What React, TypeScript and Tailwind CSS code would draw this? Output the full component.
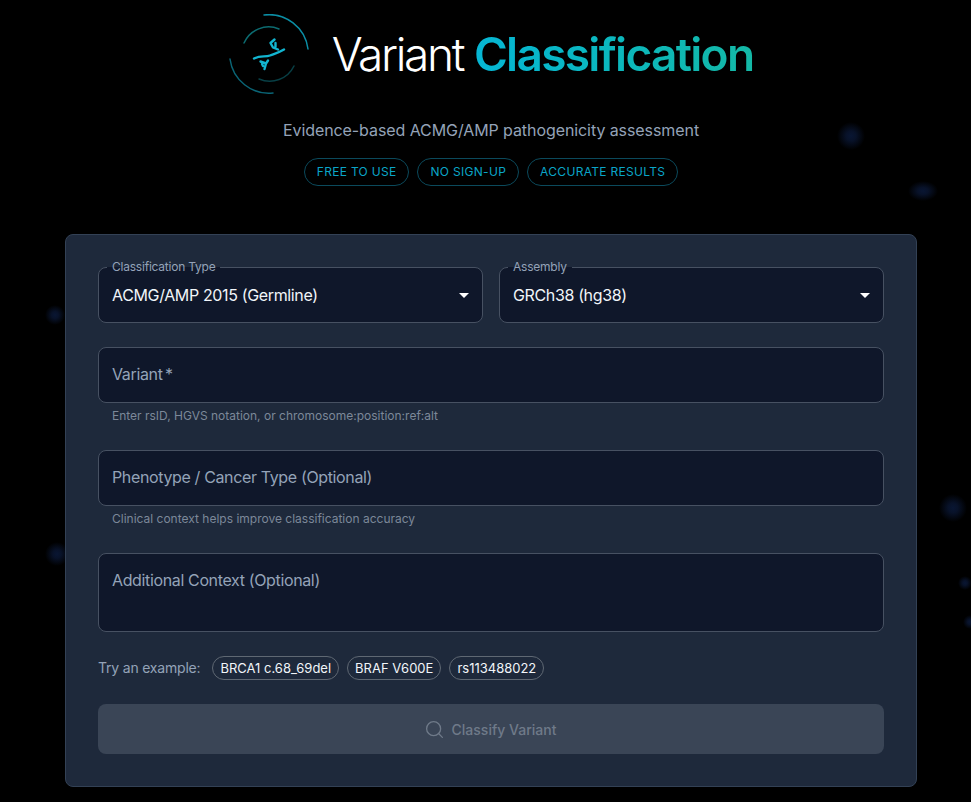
import { Search } from 'lucide-react'

const DOTS = [
  { x: 851, y: 136, w: 28, h: 28 },
  { x: 923, y: 191, w: 30, h: 20 },
  { x: 55, y: 315, w: 20, h: 20 },
  { x: 57, y: 554, w: 24, h: 24 },
  { x: 953, y: 508, w: 28, h: 28 },
  { x: 965, y: 583, w: 14, h: 14 },
  { x: 970, y: 622, w: 14, h: 14 },
]

function Logo() {
  return (
    <svg width="80" height="80" viewBox="0 0 80 80" fill="none" className="shrink-0">
      <path d="M35 1 A39.3 39.3 0 0 1 79 35" stroke="#0b8ea5" strokeWidth="1.5" strokeLinecap="round" />
      <path d="M1 45 A39.3 39.3 0 0 0 44 79" stroke="#0a6475" strokeWidth="1.5" strokeLinecap="round" />
      <path d="M15 29 A27 27 0 0 1 50 15" stroke="#0c6b70" strokeWidth="1.5" strokeLinecap="round" />
      <path d="M65 52 A27 27 0 0 1 30 65" stroke="#083f45" strokeWidth="1.5" strokeLinecap="round" />
      <g stroke="#12b5d0" strokeWidth="2.4" strokeLinecap="round" strokeLinejoin="round">
        <path d="M25 44.5 C32 41 36 43.5 41 41.5 C46 39.5 48 39.5 55 35.5" />
        <path d="M45.5 25.5 L41.5 29 L44 33.5 L49 35.5 M46.5 29 L46.5 33" />
        <path d="M31.5 47.5 L37 49.5 L35.5 55 M39 46.5 L37 49.5 M33 50 L34 52" />
      </g>
    </svg>
  )
}

function SelectField({ label, value }: { label: string; value: string }) {
  return (
    <div className="relative flex h-14 flex-1 items-center justify-between rounded-lg border border-[#475162] bg-[#0f172a] pl-[13px] pr-[13px]">
      <span className="absolute -top-[8px] left-[8px] bg-[linear-gradient(#1e293b_50%,#0f172a_50%)] px-[5px] text-xs leading-[14px] tracking-[-0.22px] text-[#94a3b8]">{label}</span>
      <span className="text-base tracking-[-0.36px] text-[#f1f5f9]">{value}</span>
      <span className="border-x-[5px] border-t-[5px] border-x-transparent border-t-white" />
    </div>
  )
}

function TextField({ label, helper, tall }: { label: string; helper?: string; tall?: boolean }) {
  return (
    <div className="mt-6">
      <div className={`rounded-lg border border-[#475162] bg-[#0f172a] px-[13px] text-base tracking-[-0.36px] text-[#94a3b8] ${tall ? 'h-[79px] pt-[14px]' : 'flex h-14 items-center pb-[2px]'}`}>
        {label}
      </div>
      {helper && <p className="ml-[14px] mt-[6px] h-[17px] text-xs leading-[14px] text-[#7c8899]">{helper}</p>}
    </div>
  )
}

function ExampleChip({ text }: { text: string }) {
  return <span className="h-6 rounded-full border border-[#5f6873] px-[7px] text-[13px] leading-[22px] text-[#f1f5f9]">{text}</span>
}

function Pill({ text }: { text: string }) {
  return (
    <span className="h-7 rounded-full border border-[#0b4a5c] px-3 text-xs leading-[26px] tracking-[0.3px] text-[#0aa5c8]">{text}</span>
  )
}

export default function App() {
  return (
    <div className="relative min-h-[802px] overflow-hidden bg-black font-['Inter',sans-serif]">
      {/* Floating background particles */}
      {DOTS.map((d, i) => (
        <span
          key={i}
          className="absolute rounded-full"
          style={{
            left: d.x - d.w / 2,
            top: d.y - d.h / 2,
            width: d.w,
            height: d.h,
            background: 'radial-gradient(closest-side, #091633 0%, #081229 35%, transparent 100%)',
          }}
        />
      ))}

      <div className="relative ml-[65px] w-[852px]">
        <header className="flex flex-col items-center">
          <div className="flex h-[108px] items-center gap-[23px]">
            <Logo />
            <h1 className="text-[46px] font-light leading-none tracking-[-2.3px] text-white">
              Variant{' '}
              <span className="bg-gradient-to-r from-[#06b6d4] to-[#14b8a6] bg-clip-text font-semibold tracking-[-1.7px] text-transparent">Classification</span>
            </h1>
          </div>
          <p className="mt-[10px] text-base leading-6 tracking-[-0.08px] text-[#94a3b8]">Evidence-based ACMG/AMP pathogenicity assessment</p>
          <div className="mt-4 flex gap-2">
            <Pill text="FREE TO USE" />
            <Pill text="NO SIGN-UP" />
            <Pill text="ACCURATE RESULTS" />
          </div>
        </header>

        <main className="mt-[48px] h-[553px] rounded-lg border border-[#334155] bg-[#1e293b] px-8 pt-8">
          <div className="flex gap-4">
            <SelectField label="Classification Type" value="ACMG/AMP 2015 (Germline)" />
            <SelectField label="Assembly" value="GRCh38 (hg38)" />
          </div>
          <TextField label={'Variant\u2009*'} helper="Enter rsID, HGVS notation, or chromosome:position:ref:alt" />
          <TextField label="Phenotype / Cancer Type (Optional)" helper="Clinical context helps improve classification accuracy" />
          <TextField label="Additional Context (Optional)" tall />

          <div className="mt-6 flex items-center gap-2">
            <span className="mr-1 text-sm tracking-[-0.2px] text-[#94a3b8]">Try an example:</span>
            <ExampleChip text="BRCA1 c.68_69del" />
            <ExampleChip text="BRAF V600E" />
            <ExampleChip text="rs113488022" />
          </div>

          <button className="mt-6 flex h-[50px] w-full items-center justify-center gap-[7px] rounded-lg bg-[#3a4556] pt-[1px] pr-[2px] text-sm font-medium text-[#6f7a89]">
            <Search size={21} strokeWidth={1.5} />
            Classify Variant
          </button>
        </main>
      </div>
    </div>
  )
}
